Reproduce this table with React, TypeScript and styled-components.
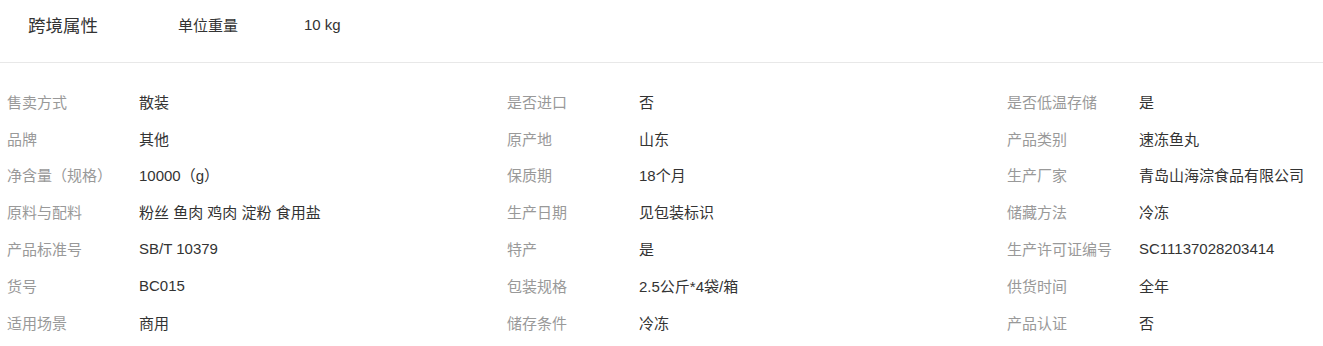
import React from 'react';
import styled, { createGlobalStyle } from 'styled-components';

const GlobalStyle = createGlobalStyle`
  body {
    margin: 0;
    background: #fff;
    font-family: "Liberation Sans", Arial, "Noto Sans CJK SC", sans-serif;
    color: #333;
  }
`;

const Page = styled.div`
  width: 1323px;
`;

const CrossBorder = styled.div`
  display: flex;
  align-items: center;
  height: 48px;
  padding: 0 0 14px 28px;
  border-bottom: 1px solid #e8e8e8;
`;

const SectionTitle = styled.h3`
  margin: 0;
  width: 150px;
  font-size: 17.5px;
  font-weight: 400;
  color: #333;
`;

const WeightLabel = styled.span`
  width: 126px;
  font-size: 15px;
  color: #333;
`;

const WeightValue = styled.span`
  font-size: 15px;
  color: #333;
`;

const AttrGrid = styled.div`
  display: grid;
  grid-template-columns: 500px 500px 1fr;
  grid-auto-rows: 36.8px;
  padding: 20px 0 0 7px;
`;

const AttrItem = styled.div`
  display: flex;
  align-items: center;
  font-size: 15px;
  white-space: nowrap;
`;

const AttrName = styled.span`
  width: 132px;
  color: #999;
`;

const AttrValue = styled.span`
  color: #333;
`;

const attrs: [string, string][] = [
  ['售卖方式', '散装'],
  ['是否进口', '否'],
  ['是否低温存储', '是'],
  ['品牌', '其他'],
  ['原产地', '山东'],
  ['产品类别', '速冻鱼丸'],
  ['净含量（规格）', '10000（g）'],
  ['保质期', '18个月'],
  ['生产厂家', '青岛山海淙食品有限公司'],
  ['原料与配料', '粉丝 鱼肉 鸡肉 淀粉 食用盐'],
  ['生产日期', '见包装标识'],
  ['储藏方法', '冷冻'],
  ['产品标准号', 'SB/T 10379'],
  ['特产', '是'],
  ['生产许可证编号', 'SC11137028203414'],
  ['货号', 'BC015'],
  ['包装规格', '2.5公斤*4袋/箱'],
  ['供货时间', '全年'],
  ['适用场景', '商用'],
  ['储存条件', '冷冻'],
  ['产品认证', '否'],
];

export default function App() {
  return (
    <Page>
      <GlobalStyle />
      <CrossBorder>
        <SectionTitle>跨境属性</SectionTitle>
        <WeightLabel>单位重量</WeightLabel>
        <WeightValue>10 kg</WeightValue>
      </CrossBorder>
      <AttrGrid>
        {attrs.map(([name, value]) => (
          <AttrItem key={name}>
            <AttrName>{name}</AttrName>
            <AttrValue>{value}</AttrValue>
          </AttrItem>
        ))}
      </AttrGrid>
    </Page>
  );
}
